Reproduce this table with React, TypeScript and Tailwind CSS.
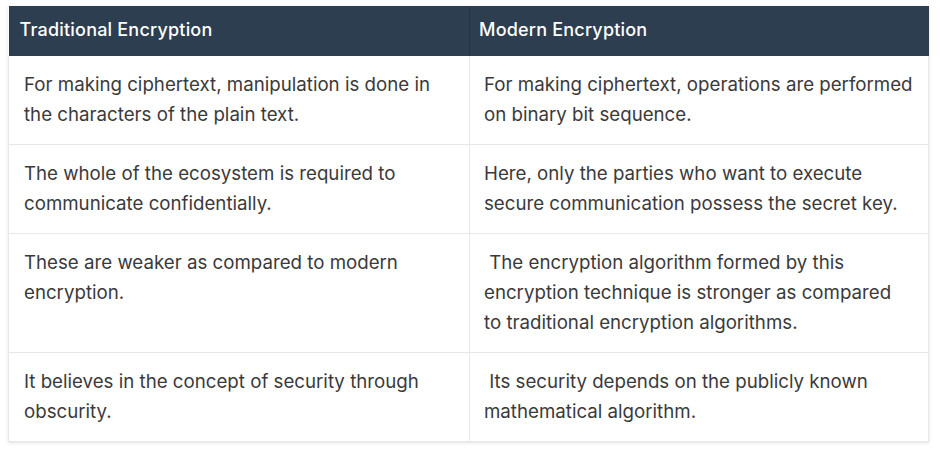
import type { ReactNode } from "react";

const rows: [ReactNode, ReactNode][] = [
  [
    "For making ciphertext, manipulation is done in the characters of the plain text.",
    "For making ciphertext, operations are performed on binary bit sequence.",
  ],
  [
    "The whole of the ecosystem is required to communicate confidentially.",
    "Here, only the parties who want to execute secure communication possess the secret key.",
  ],
  [
    "These are weaker as compared to modern encryption.",
    <>
      {"\u00a0The encryption algorithm formed by this encryption technique is stronger as compared"}
      <br />
      to traditional encryption algorithms.
    </>,
  ],
  [
    "It believes in the concept of security through obscurity.",
    "\u00a0Its security depends on the publicly known mathematical algorithm.",
  ],
];

export default function App() {
  return (
    <div className="w-[940px] h-[450px] bg-white pt-[6px] pl-[8px] font-['Inter',sans-serif]">
      <table className="w-[921px] border-collapse table-fixed shadow-[0_1px_3px_rgba(0,0,0,0.12)]">
        <colgroup>
          <col className="w-[461px]" />
          <col />
        </colgroup>
        <thead>
          <tr className="bg-[#2c3e50] text-white h-[50px]">
            <th className="text-left font-medium text-[18px] tracking-[0.2px] pl-[11px] pb-[3px] border-r border-[#253545]">
              Traditional Encryption
            </th>
            <th className="text-left font-medium text-[18px] tracking-[0.2px] pl-[9px] pb-[3px]">Modern Encryption</th>
          </tr>
        </thead>
        <tbody>
          {rows.map((row, i) => (
            <tr key={i} className="border-b border-[#e8e8e8]">
              <td className="align-top text-[18.7px] leading-[30px] text-[#3a3a3a] pl-[15px] pr-[10px] py-[14px] border-r border-l border-[#e8e8e8]">
                {row[0]}
              </td>
              <td className="align-top text-[18.7px] leading-[30px] text-[#3a3a3a] pl-[14px] pr-[10px] py-[14px] border-r border-[#e8e8e8]">
                {row[1]}
              </td>
            </tr>
          ))}
        </tbody>
      </table>
    </div>
  );
}
